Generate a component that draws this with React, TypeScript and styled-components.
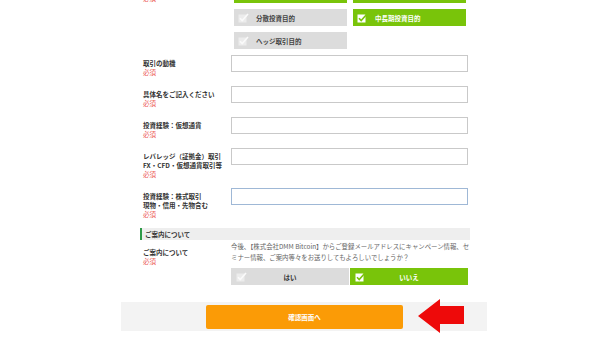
import React from "react";
import styled, { createGlobalStyle } from "styled-components";

const GlobalStyle = createGlobalStyle`
  html, body { margin: 0; padding: 0; background: #fff; }
  body {
    font-family: "Noto Sans CJK JP", "Noto Sans", sans-serif;
    overflow: hidden;
  }
  * { box-sizing: border-box; }
`;

const Page = styled.div`
  width: 600px;
  height: 350px;
  overflow: hidden;
`;

const Form = styled.div`
  margin-left: 121px;
  width: 366px;
`;

const Inner = styled.div`
  padding: 0 17px 0 19px;
`;

const Row = styled.div<{ $gap?: number }>`
  display: grid;
  grid-template-columns: 91px 239px;
  margin-bottom: ${(p) => (p.$gap ?? 9)}px;
`;

const Label = styled.div<{ $top?: number }>`
  margin-top: ${(p) => p.$top ?? 4}px;
  padding-left: 3px;
  font-size: 6.5px;
  line-height: 9px;
  font-weight: 700;
  color: #333;
  white-space: nowrap;
`;

const Required = styled.div`
  color: #ec5a55;
  font-weight: 400;
`;

const Input = styled.div<{ $focus?: boolean }>`
  width: 237px;
  height: 17px;
  background: #fff;
  border: 1px solid ${(p) => (p.$focus ? "#9fb8d6" : "#c9c9c9")};
`;

const CheckGrid = styled.div`
  display: grid;
  grid-template-columns: 113px 113px;
  grid-template-rows: 3px 17px 17px;
  column-gap: 6px;
  row-gap: 6px;
  padding-left: 3px;
`;

const CheckBox = styled.div<{ $on?: boolean }>`
  display: flex;
  align-items: center;
  gap: 7px;
  padding-left: 4px;
  background: ${(p) => (p.$on ? "#79c40a" : "#dcdcdc")};
  color: ${(p) => (p.$on ? "#fff" : "#444")};
  font-size: 6.5px;
  font-weight: 700;
  white-space: nowrap;
`;

const SectionHeader = styled.div`
  margin-top: 2px;
  height: 12px;
  display: flex;
  align-items: center;
  background: #eeeeee;
  border-left: 2px solid #2e9a48;
  padding-left: 3px;
  font-size: 6.5px;
  font-weight: 700;
  color: #333;
`;

const GuideRow = styled.div`
  display: grid;
  grid-template-columns: 91px 239px;
  margin-top: 1px;
`;

const GuideText = styled.div`
  font-size: 6.4px;
  line-height: 11px;
  color: #666;
`;

const Choices = styled.div`
  display: flex;
  gap: 1px;
  margin-top: 5px;
`;

const Choice = styled.div<{ $on?: boolean }>`
  position: relative;
  width: 118px;
  height: 17px;
  display: flex;
  align-items: center;
  justify-content: center;
  background: ${(p) => (p.$on ? "#79c40a" : "#dcdcdc")};
  color: ${(p) => (p.$on ? "#fff" : "#333")};
  font-size: 6.5px;
  font-weight: 700;
`;

const ChoiceIcon = styled.span`
  position: absolute;
  left: 5px;
  top: 4px;
  display: flex;
`;

const Footer = styled.div`
  position: relative;
  margin-top: 17px;
  height: 29px;
  padding: 3px 0 0 85px;
  background: #f3f3f3;
`;

const SubmitButton = styled.div`
  width: 197px;
  height: 24px;
  border-radius: 2px;
  background: #fb9b06;
  color: #fff;
  font-size: 6.5px;
  font-weight: 700;
  display: flex;
  align-items: center;
  justify-content: center;
`;

const Arrow = styled.svg`
  position: absolute;
  left: 297px;
  top: -3px;
`;

const Check = ({ on }: { on?: boolean }) => (
  <svg width="11" height="10" viewBox="0 0 11 10">
    <rect x="0.5" y="1.5" width="8" height="8" fill={on ? "#fff" : "#ececec"} />
    <path
      d="M2 5.2 L4.2 7.6 L10 1"
      fill="none"
      stroke={on ? "#79c40a" : "#fafafa"}
      strokeWidth="1.6"
    />
  </svg>
);

const fields: { lines: string[]; focus?: boolean }[] = [
  { lines: ["取引の動機"] },
  { lines: ["具体名をご記入ください"] },
  { lines: ["投資経験：仮想通貨"] },
  { lines: ["レバレッジ（証拠金）取引", "FX・CFD・仮想通貨取引等"] },
  { lines: ["投資経験：株式取引", "現物・信用・先物含む"], focus: true },
];

export default function App() {
  return (
    <Page>
      <GlobalStyle />
      <Form>
        <Inner>
          <Row $gap={6}>
            <Label $top={-6}>
              <Required>必須</Required>
            </Label>
            <CheckGrid>
              <CheckBox $on />
              <CheckBox $on />
              <CheckBox>
                <Check />
                分散投資目的
              </CheckBox>
              <CheckBox $on>
                <Check on />
                中長期投資目的
              </CheckBox>
              <CheckBox>
                <Check />
                ヘッジ取引目的
              </CheckBox>
            </CheckGrid>
          </Row>
          {fields.map((f, i) => (
            <Row key={i}>
              <Label>
                {f.lines.map((l) => (
                  <div key={l}>{l}</div>
                ))}
                <Required>必須</Required>
              </Label>
              <Input $focus={f.focus} />
            </Row>
          ))}
          <SectionHeader>ご案内について</SectionHeader>
          <GuideRow>
            <Label $top={7}>
              <div>ご案内について</div>
              <Required>必須</Required>
            </Label>
            <div>
              <GuideText>
                今後、【株式会社DMM Bitcoin】からご登録メールアドレスにキャンペーン情報、セミナー情報、ご案内等々をお送りしてもよろしいでしょうか？
              </GuideText>
              <Choices>
                <Choice>
                  <ChoiceIcon>
                    <Check />
                  </ChoiceIcon>
                  はい
                </Choice>
                <Choice $on>
                  <ChoiceIcon>
                    <Check on />
                  </ChoiceIcon>
                  いいえ
                </Choice>
              </Choices>
            </div>
          </GuideRow>
        </Inner>
        <Footer>
          <SubmitButton>確認画面へ</SubmitButton>
          <Arrow width="46" height="34" viewBox="0 0 46 34">
            <polygon points="0,17 22,0 22,7 46,7 46,25 22,25 22,34" fill="#ee0a0a" />
          </Arrow>
        </Footer>
      </Form>
    </Page>
  );
}
